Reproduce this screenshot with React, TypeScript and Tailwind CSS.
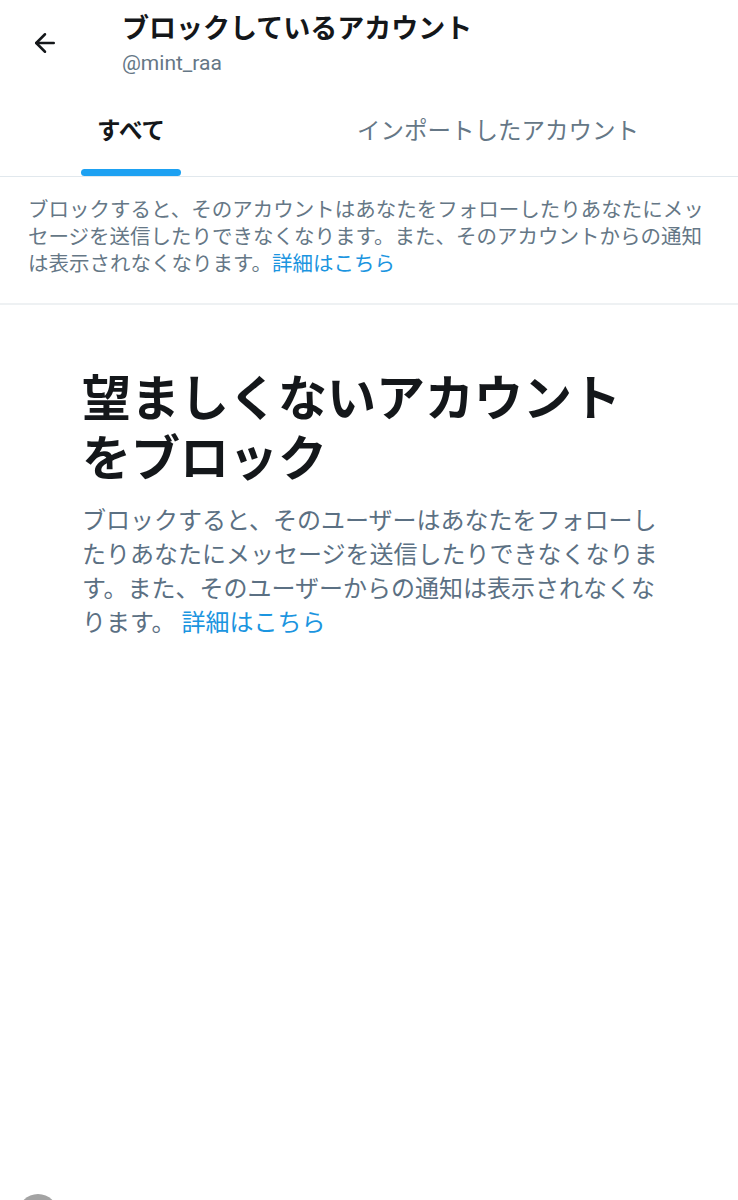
import { ArrowLeft } from "lucide-react";

const FONT = "font-['Roboto','Noto_Sans_CJK_JP',sans-serif]";

export default function App() {
  return (
    <div
      className={`relative h-[1200px] w-full overflow-hidden bg-white ${FONT}`}
    >
      {/* header */}
      <header className="flex items-start pt-[11px]">
        <button className="ml-[30px] mt-[17px] text-[#14171a]">
          <ArrowLeft size={30} strokeWidth={2} />
        </button>
        <div className="ml-[62px]">
          <h1 className="text-[27px] leading-[36px] font-bold text-[#14171a]">
            ブロックしているアカウント
          </h1>
          <p className="mt-[3px] text-[21px] leading-[26px] text-[#657786]">
            @mint_raa
          </p>
        </div>
      </header>

      {/* tabs */}
      <nav className="mt-[18px] flex h-[83px] border-b border-[#e1e8ed] pl-[81px]">
        <div className="flex w-[100px] flex-col items-center">
          <span className="mt-[22px] text-[23.5px] leading-[30px] font-bold text-[#14171a]">
            すべて
          </span>
          <span className="mt-auto h-[7px] w-full rounded-full bg-[#1da1f2]" />
        </div>
        <div className="ml-[176px]">
          <span className="mt-[22px] block text-[23.5px] leading-[30px] text-[#657786]">
            インポートしたアカウント
          </span>
        </div>
      </nav>

      {/* description */}
      <p className="border-b-2 border-[#eef1f3] pt-[20px] pr-[26px] pb-[25px] pl-[28px] text-[20.5px] leading-[27px] text-[#657786]">
        ブロックすると、そのアカウントはあなたをフォローしたりあなたにメッセージを送信したりできなくなります。また、そのアカウントからの通知は表示されなくなります。
        <span className="text-[#1b95e0]">詳細はこちら</span>
      </p>

      {/* empty state */}
      <section className="ml-[82px] mt-[65px] w-[580px]">
        <h2 className="text-[49px] leading-[60px] font-bold text-[#14171a]">
          望ましくないアカウントをブロック
        </h2>
        <p className="mt-[14px] text-[24px] leading-[34px] text-[#5b7083]">
          ブロックすると、そのユーザーはあなたをフォローしたりあなたにメッセージを送信したりできなくなります。また、そのユーザーからの通知は表示されなくなります。{" "}
          <span className="text-[#1b95e0]">詳細はこちら</span>
        </p>
      </section>

      {/* floating button peeking at bottom */}
      <div className="absolute left-[18px] top-[1194px] h-[40px] w-[40px] rounded-full bg-[#a3a3a3]" />
    </div>
  );
}
